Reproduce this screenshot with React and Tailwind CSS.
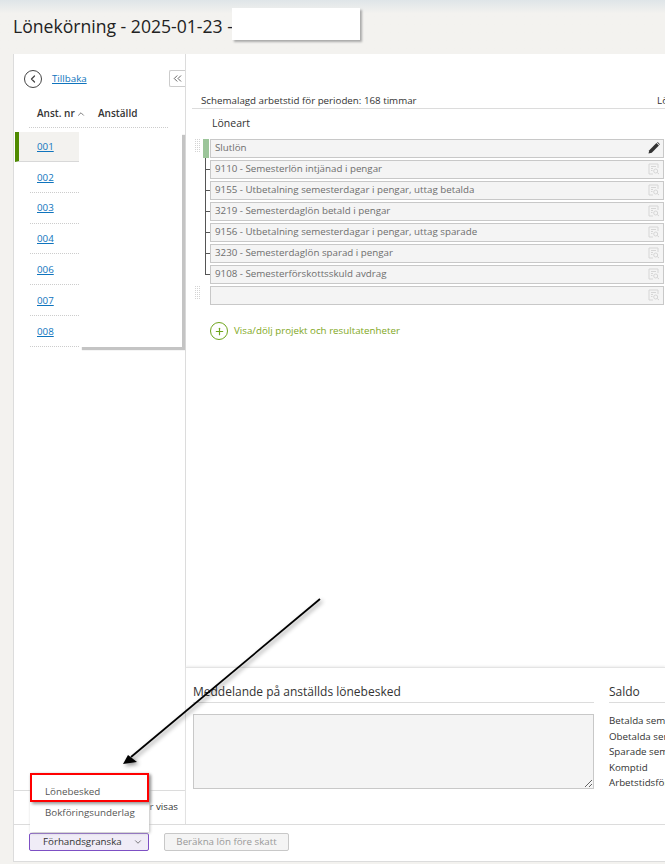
import { ChevronLeft, ChevronsLeft, ChevronUp, ChevronDown, Plus } from "lucide-react"

const employees = ["001", "002", "003", "004", "006", "007", "008"]

const rows = [
  "9110 - Semesterlön intjänad i pengar",
  "9155 - Utbetalning semesterdagar i pengar, uttag betalda",
  "3219 - Semesterdaglön betald i pengar",
  "9156 - Utbetalning semesterdagar i pengar, uttag sparade",
  "3230 - Semesterdaglön sparad i pengar",
  "9108 - Semesterförskottsskuld avdrag",
]

const saldo = ["Betalda semesterdagar", "Obetalda semesterdagar", "Sparade semesterdagar", "Komptid", "Arbetstidsförkortning"]

function Grip() {
  return (
    <div className="w-[5px] self-start grid grid-cols-3 gap-[1px]">
      {Array.from({ length: 21 }).map((_, i) => (
        <span key={i} className="w-[1px] h-[1px] bg-[#d4d4d4]" />
      ))}
    </div>
  )
}

function DocSearch() {
  return (
    <svg width="12" height="12" viewBox="0 0 12 12" fill="none" stroke="#d6d6d6" strokeWidth="1">
      <path d="M5 11H1V1h9v4" />
      <path d="M3 3.5h5M3 5.5h2M3 7.5h1.5" />
      <circle cx="7.7" cy="8" r="2" />
      <path d="M9.2 9.5L11 11" />
    </svg>
  )
}

function Pencil() {
  return (
    <svg width="12" height="12" viewBox="0 0 12 12" fill="#333">
      <path d="M0.5 11.5L1.3 8.2 8.4 1.1 10.9 3.6 3.8 10.7Z" />
      <path d="M9.1 0.5L9.7 0.1 11.9 2.3 11.5 2.9Z" />
    </svg>
  )
}

function Row({ text, icon }) {
  return (
    <div className="h-[19px] w-[454px] shrink-0 flex items-center justify-between pl-[4px] pr-[3px] pb-[1px] bg-[#f4f4f4] border border-[#c8c8c8] text-[9.75px] text-[#6e6e6e]">
      <span>{text}</span>
      {icon}
    </div>
  )
}

export default function App() {
  return (
    <div className="relative w-[665px] h-[864px] overflow-hidden flex flex-col bg-[#f3f2ef] text-[#333] font-['Open_Sans',sans-serif]">
      {/* header */}
      <div className="h-[54px] shrink-0 pl-[13px] pt-[13px] bg-gradient-to-b from-[#dfe5e8] via-[#f3f2ef] via-[25%] to-[#f3f2ef]">
        <h1 className="text-[17.6px] leading-[26px] text-[#222]">Lönekörning - 2025-01-23 -</h1>
      </div>

      <div className="flex-1 ml-[13px] mb-[2px] min-h-0 flex flex-col bg-white border-l border-b border-[#dcdcdc]">
        <div className="flex-1 min-h-0 flex">
          {/* left column */}
          <div className="w-[172px] shrink-0 flex flex-col border-r border-[#dcdcdc]">
            <div className="h-[48px] shrink-0 flex items-center pt-[2px] pl-[10px] relative">
              <span className="w-[18px] h-[18px] rounded-full border-[1.5px] border-[#444] flex items-center justify-center">
                <ChevronLeft size={12} strokeWidth={2.5} color="#444" />
              </span>
              <a className="ml-[10px] text-[9.75px] text-[#0f74bd] underline">Tillbaka</a>
              <span className="absolute right-0 top-[16px] w-[16px] h-[17px] flex items-center justify-center bg-white border border-r-0 border-[#ccc] rounded-l-[2px]">
                <ChevronsLeft size={13} strokeWidth={1.4} color="#333" />
              </span>
            </div>
            <div className="h-[26px] shrink-0 ml-[15px] mr-[17px] pt-[4px] flex items-start border-b border-dotted border-[#ccc] text-[10px] font-semibold text-[#333]">
              <span className="ml-[8px] flex items-center w-[61px]">
                Anst. nr
                <ChevronUp size={10} strokeWidth={1.5} className="ml-[1px]" />
              </span>
              <span>Anställd</span>
            </div>
            <div className="flex mt-[4px] ml-[1px]">
              <div className="w-[64px] shrink-0 flex flex-col">
                {employees.map((id, i) => (
                  <div
                    key={id}
                    className={
                      i === 0
                        ? "h-[30px] flex items-center pt-[2px] pl-[18px] bg-[#f3f2ef] border-l-[4px] border-[#4f8a00] border-b border-b-[#d8d8d8] text-[9.75px] text-[#0f74bd]"
                        : "h-[30.8px] ml-[15px] flex items-center pt-[2px] pl-[7px] border-b border-dotted border-[#ccc] text-[9.75px] text-[#0f74bd]"
                    }
                  >
                    <a className="underline">{id}</a>
                  </div>
                ))}
              </div>
              <div className="w-[103px] bg-white shadow-[3px_3px_1px_#c4c4c4]" />
            </div>
            <div className="flex-1" />
            <div className="h-[34px] shrink-0 flex items-center justify-end pr-[7px] border-t border-[#dcdcdc] text-[9.75px] text-[#333] whitespace-nowrap">
              r visas
            </div>
          </div>

          {/* right column */}
          <div className="flex-1 min-w-0 flex flex-col">
            <div className="flex-1 min-h-0 pl-[6px] pt-[37px] overflow-hidden">
              <div className="h-[18px] pt-[3px] flex items-center justify-between border-b border-[#dcdcdc] text-[9.75px] text-[#333] whitespace-nowrap -mr-[9px]">
                <span className="ml-[9px]">Schemalagd arbetstid för perioden: 168 timmar</span>
                <span>Lön</span>
              </div>
              <div className="h-[30px] flex items-center pl-[20px] text-[10.5px] text-[#333]">Löneart</div>
              <div className="flex flex-col gap-[2px] pl-[3px]">
                <div className="flex items-center">
                  <Grip />
                  <span className="ml-[3px] w-[6px] h-[19px] bg-[#9cc59a]" />
                  <span className="ml-px" />
                  <Row text="Slutlön" icon={<Pencil />} />
                </div>
                {rows.map((r, i) => (
                  <div key={r} className="flex items-center pl-[15px] relative">
                    <span className={i === 5 ? "absolute left-[10px] -top-[2px] h-[12px] w-[5px] border-l border-b border-[#555]" : "absolute left-[10px] -top-[2px] h-[21px] w-[5px] border-l border-[#555]"} />
                    <span className={i === 5 ? "" : "absolute left-[11px] top-[9px] h-[1px] w-[4px] bg-[#555]"} />
                    <Row text={r} icon={<DocSearch />} />
                  </div>
                ))}
                <div className="flex items-center">
                  <Grip />
                  <span className="ml-[10px]" />
                  <Row text="" icon={<DocSearch />} />
                </div>
              </div>
              <div className="mt-[17px] ml-[18px] flex items-center text-[9.75px] text-[#7fa81c]">
                <span className="w-[18px] h-[18px] rounded-full border-[1.5px] border-[#6fa51c] flex items-center justify-center">
                  <Plus size={11} strokeWidth={2.5} color="#6fa51c" />
                </span>
                <span className="ml-[6px]">Visa/dölj projekt och resultatenheter</span>
              </div>
            </div>

            {/* bottom section */}
            <div className="h-[157px] shrink-0 flex pl-[7px] pt-[15px] border-t border-[#e4e4e4] shadow-[0_-1px_2px_#eee] whitespace-nowrap">
              <div className="w-[401px] shrink-0">
                <div className="h-[20px] border-b border-[#dcdcdc] text-[12px] leading-[17px] text-[#333]">Meddelande på anställds lönebesked</div>
                <textarea readOnly className="block mt-[11px] w-[401px] h-[75px] bg-[#f4f4f4] border border-[#c8c8c8] outline-none" />
              </div>
              <div className="ml-[15px] flex-1 min-w-0">
                <div className="h-[20px] border-b border-[#dcdcdc] text-[12px] leading-[17px] text-[#333]">Saldo</div>
                <div className="mt-[10px] flex flex-col text-[9.75px] leading-[15.5px] text-[#333]">
                  {saldo.map((s) => (
                    <span key={s}>{s}</span>
                  ))}
                </div>
              </div>
            </div>
          </div>
        </div>

        {/* footer */}
        <div className="h-[37px] shrink-0 flex items-start pt-[8px] pl-[15px] border-t border-[#dcdcdc]">
          <button className="w-[120px] h-[18px] flex items-center justify-between pl-[13px] pr-[5px] bg-[#f0ecf7] border border-[#7d4fc4] rounded-[2px] text-[9.75px] text-[#333]">
            Förhandsgranska
            <ChevronDown size={10} strokeWidth={1.5} />
          </button>
          <button className="ml-[15px] w-[125px] h-[18px] flex items-center justify-center bg-[#f4f4f4] border border-[#c8c8c8] rounded-[2px] text-[9.75px] text-[#999]">
            Beräkna lön före skatt
          </button>
        </div>
      </div>

      {/* redacted title part */}
      <div className="absolute left-[232px] top-[8px] w-[128px] h-[32px] bg-white shadow-[2px_2px_2px_#aaa]" />

      {/* dropdown */}
      <div className="absolute left-[30px] top-[773px] w-[119px] h-[59px] bg-white shadow-[1px_1px_3px_#bbb] text-[9.8px] text-[#555]">
        <div className="h-[29px] flex items-center pt-[10px] pl-[13px] border-[2px] border-[#f00] shadow-[2px_2px_3px_#999]">Lönebesked</div>
        <div className="h-[22px] flex items-center pl-[15px]">Bokföringsunderlag</div>
      </div>

      {/* arrow */}
      <svg className="absolute left-0 top-0 pointer-events-none drop-shadow-[2px_2px_2px_rgba(0,0,0,0.45)]" width="665" height="864" fill="none">
        <path d="M320 599L131 757" stroke="#000" strokeWidth="1.8" />
        <path d="M123 764L128 755 137 762Z" fill="#000" />
      </svg>
    </div>
  )
}
